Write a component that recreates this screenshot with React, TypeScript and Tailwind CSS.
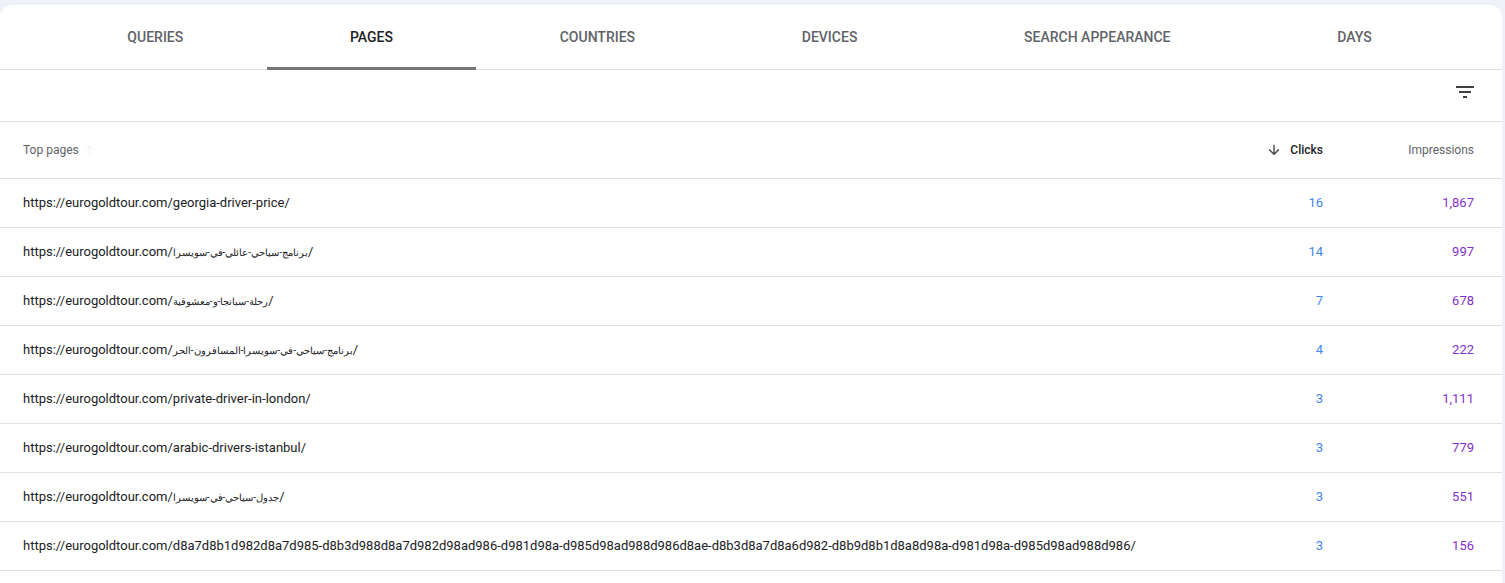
const tabs = ["Queries", "Pages", "Countries", "Devices", "Search appearance", "Days"];

const rows = [
  { url: "https://eurogoldtour.com/georgia-driver-price/", clicks: "16", impressions: "1,867" },
  { url: "https://eurogoldtour.com/", ar: "برنامج-سياحي-عائلي-في-سويسرا", clicks: "14", impressions: "997" },
  { url: "https://eurogoldtour.com/", ar: "رحلة-سبانجا-و-معشوقية", clicks: "7", impressions: "678" },
  { url: "https://eurogoldtour.com/", ar: "برنامج-سياحي-في-سويسرا-المسافرون-الحر", clicks: "4", impressions: "222" },
  { url: "https://eurogoldtour.com/private-driver-in-london/", clicks: "3", impressions: "1,111" },
  { url: "https://eurogoldtour.com/arabic-drivers-istanbul/", clicks: "3", impressions: "779" },
  { url: "https://eurogoldtour.com/", ar: "جدول-سياحي-في-سويسرا", clicks: "3", impressions: "551" },
  {
    url: "https://eurogoldtour.com/d8a7d8b1d982d8a7d985-d8b3d988d8a7d982d98ad986-d981d98a-d985d98ad988d986d8ae-d8b3d8a7d8a6d982-d8b9d8b1d8a8d98a-d981d98a-d985d98ad988d986/",
    clicks: "3",
    impressions: "156",
  },
];

const ArrowDown = ({ className }: { className?: string }) => (
  <svg viewBox="0 0 24 24" className={className} fill="currentColor">
    <path d="M20 12l-1.41-1.41L13 16.17V4h-2v12.17l-5.58-5.59L4 12l8 8 8-8z" />
  </svg>
);

const ArrowUp = ({ className }: { className?: string }) => (
  <svg viewBox="0 0 24 24" className={className} fill="currentColor">
    <path d="M4 12l1.41 1.41L11 7.83V20h2V7.83l5.58 5.59L20 12l-8-8-8 8z" />
  </svg>
);

const FilterIcon = () => (
  <svg viewBox="0 0 24 24" className="w-6 h-6 text-[#3c4043]" fill="currentColor">
    <path d="M10 18h4v-2h-4v2zM3 6v2h18V6H3zm3 7h12v-2H6v2z" />
  </svg>
);

export default function App() {
  return (
    <div className="min-h-[583px] bg-[#eef2f8] pt-[5px] pr-[3px] font-['Roboto',sans-serif]">
      <div className="bg-white rounded-t-xl min-h-[578px]">
        {/* Tabs */}
        <div className="flex h-[65px] pl-[44px] pr-[47px] border-b border-[#e0e0e0]">
          {tabs.map((t) => {
            const active = t === "Pages";
            return (
              <div
                key={t}
                className={
                  "relative flex-auto flex items-center justify-center text-sm font-medium uppercase " +
                  (active ? "text-[#202124]" : "text-[#5f6368]")
                }
              >
                {t}
                {active && <div className="absolute left-0 right-0 -bottom-px h-[3px] bg-[#757575]" />}
              </div>
            );
          })}
        </div>

        {/* Filter bar */}
        <div className="flex items-start justify-end h-[52px] pt-[10px] pr-[25px] border-b border-[#e0e0e0]">
          <FilterIcon />
        </div>

        {/* Header */}
        <div className="flex items-center h-[57px] pl-[23px] pr-[28px] border-b border-[#e0e0e0] text-xs">
          <div className="flex-1 flex items-center gap-1 text-[#5f6368]">
            Top pages
            <ArrowUp className="w-[14px] h-[14px] text-[#f1f3f4]" />
          </div>
          <div className="w-[150px] flex items-center justify-end gap-2 font-medium text-[#202124]">
            <ArrowDown className="w-4 h-4 text-[#3c4043]" />
            Clicks
          </div>
          <div className="w-[151px] text-right text-[#5f6368]">Impressions</div>
        </div>

        {/* Rows */}
        {rows.map((r, i) => (
          <div
            key={i}
            className="flex items-center h-[49px] pl-[23px] pr-[28px] border-b border-[#e0e0e0] text-[13px]"
          >
            <div className="flex-1 text-[#202124] whitespace-nowrap">
              {r.url}
              {r.ar && (
                <>
                  <span className="text-[10px]">{r.ar}</span>/
                </>
              )}
            </div>
            <div className="w-[150px] text-right text-[#4285f4]">{r.clicks}</div>
            <div className="w-[151px] text-right text-[#8430ce]">{r.impressions}</div>
          </div>
        ))}
      </div>
    </div>
  );
}
